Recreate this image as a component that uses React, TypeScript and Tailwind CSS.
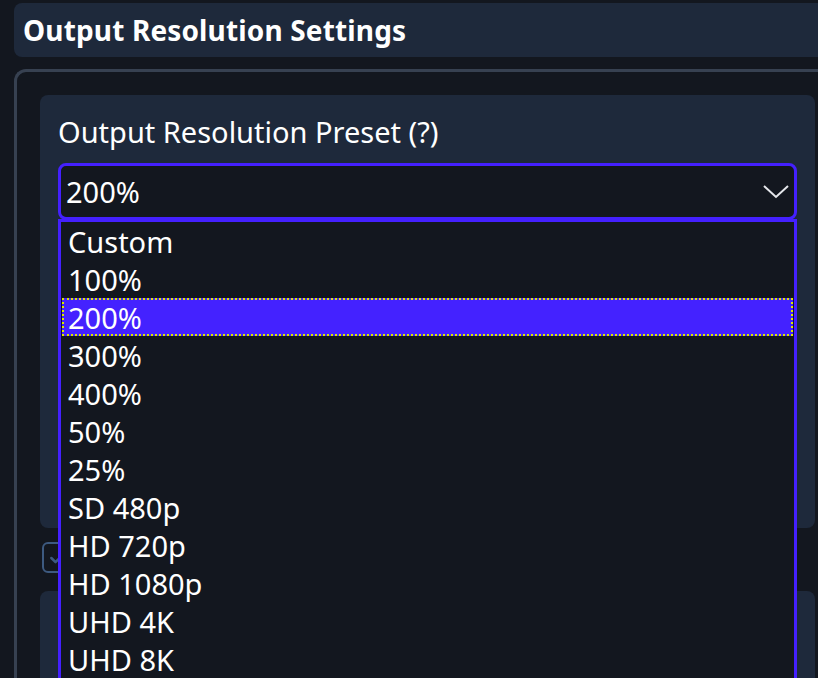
import { Check } from 'lucide-react';

const OPTIONS = ['Custom', '100%', '200%', '300%', '400%', '50%', '25%', 'SD 480p', 'HD 720p', 'HD 1080p', 'UHD 4K', 'UHD 8K'];

const font = { fontFamily: '"Noto Sans", "Open Sans", sans-serif' };

export default function App() {
    const selected = '200%';

    return (
        <div className="h-[678px] w-[818px] overflow-hidden bg-[#13171f] pl-[14px] pt-[3px] text-white" style={font}>
            {/* Title bar */}
            <div className="flex h-[54px] items-center rounded-l-lg bg-[#1e293b] px-[9px]">
                <h1 className="text-[28px] font-bold leading-none tracking-[0.15px]">Output Resolution Settings</h1>
            </div>

            {/* Group box */}
            <div className="mt-[12px] h-[700px] rounded-tl-xl border-l-[3px] border-t-[3px] border-[#374151] pl-[23px] pt-[23px]">
                <div className="relative h-[433px] w-[775px] rounded-lg bg-[#1e293b] px-[18px] pt-[21px]">
                    <label className="block h-[32px] text-[29px] leading-[32px]">Output Resolution Preset (?)</label>

                    <div className="relative mt-[15px]">
                        <div className="flex h-[57px] items-center justify-between rounded-lg border-[3px] border-[#4420ff] bg-[#13171f] pl-[5px] pr-[5px]">
                            <span className="text-[29px] leading-none">{selected}</span>
                            <svg width="26" height="16" viewBox="0 0 26 16" className="text-gray-200">
                                <polyline points="1,2 13,13 25,2" fill="none" stroke="currentColor" strokeWidth="2" />
                            </svg>
                        </div>

                        {/* Open dropdown list */}
                        <div className="absolute left-0 right-0 top-[56px] z-10 h-[500px] border-x-[3px] border-t-[3px] border-[#4420ff] bg-[#13171f] px-px">
                            {OPTIONS.map((opt) => (
                                <div
                                    key={opt}
                                    className={
                                        opt === selected
                                            ? 'flex h-[38px] items-center bg-[#4422ff] pl-[6px] text-[29px] leading-none outline-2 outline-dotted -outline-offset-2 outline-[#dce600]'
                                            : 'flex h-[38px] items-center pl-[6px] text-[29px] leading-none'
                                    }
                                >
                                    {opt}
                                </div>
                            ))}
                        </div>
                    </div>
                </div>

                {/* Checkbox row */}
                <div className="ml-[2px] mt-[14px] flex h-[31px] w-[31px] items-center justify-center rounded-md border-2 border-[#3d5a80]">
                    <Check className="h-5 w-5 text-[#3d5a80]" strokeWidth={3} />
                </div>

                <div className="mt-[18px] h-[200px] w-[775px] rounded-lg bg-[#1e293b]" />
            </div>
        </div>
    );
}
